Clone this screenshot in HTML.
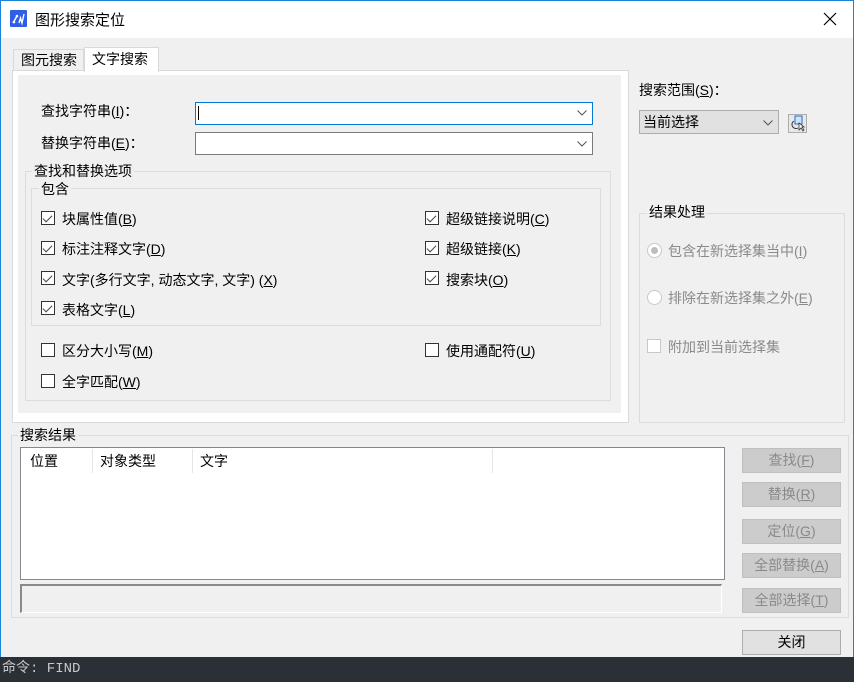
<!DOCTYPE html>
<html><head><meta charset="utf-8"><style>
*{margin:0;padding:0;box-sizing:border-box}
body{width:854px;height:682px;overflow:hidden;background:#f0f0f0;font-family:"Liberation Sans","Microsoft YaHei","Noto Sans CJK SC",sans-serif;font-size:14px;color:#000;position:relative}
.a{position:absolute;white-space:nowrap}
.cb{position:absolute;width:14px;height:14px;border:1px solid #333;background:#fff}
.cb.c::after{content:"";position:absolute;left:3px;top:1px;width:4px;height:8px;border:solid #444;border-width:0 1.3px 1.3px 0;transform:rotate(45deg)}
.grp{position:absolute;border:1px solid #dcdcdc}
.lg{position:absolute;background:#f0f0f0;padding:0 2px;line-height:16px}
.btn{position:absolute;left:742px;width:99px;height:25px;background:#cccccc;border:1px solid #bfbfbf;color:#8a8a8a;text-align:center;line-height:23px}
u{text-decoration:underline}
</style></head><body>
<div class="a" style="left:0;top:0;width:854px;height:38px;background:#fff"></div>
<div class="a" style="left:0;top:0;width:1px;height:657px;background:#1883d7"></div>
<div class="a" style="right:0;top:0;width:1px;height:657px;background:#1883d7"></div>
<div class="a" style="left:0;top:0;width:854px;height:1px;background:#1883d7"></div>
<svg class="a" style="left:10px;top:10px" width="17" height="17"><rect width="17" height="17" rx="1" fill="#2f5fe8"/><path d="M3 13L7 6M9 13L10.5 8L12 13L14 4" fill="none" stroke="#fff" stroke-width="1.4"/><circle cx="4" cy="12" r="1.3" fill="#fff"/><circle cx="7" cy="6" r="1.3" fill="#fff"/></svg>
<div class="a" style="left:35px;top:9px;font-size:15px">图形搜索定位</div>
<svg class="a" style="left:823px;top:12px" width="14" height="14"><path d="M1 1L13 13M13 1L1 13" stroke="#000" stroke-width="1.2"/></svg>

<div class="a" style="left:13px;top:49px;width:71px;height:22px;border:1px solid #d9d9d9;border-bottom:none;line-height:20px;padding-left:7px">图元搜索</div>
<div class="a" style="left:84px;top:47px;width:75px;height:25px;border:1px solid #d9d9d9;border-bottom:none;background:#fff;line-height:22px;padding-left:7px;z-index:2">文字搜索</div>
<div class="a" style="left:12px;top:70px;width:617px;height:353px;border:1px solid #d9d9d9;background:#fff"></div>
<div class="a" style="left:18px;top:75px;width:603px;height:338px;background:#f0f0f0"></div>

<div class="a" style="left:41px;top:101px">查找字符串(<u>I</u>)：</div>
<div class="a" style="left:195px;top:102px;width:398px;height:23px;border:1px solid #0078d7;background:#fff"></div>
<div class="a" style="left:198px;top:106px;width:1px;height:14px;background:#000"></div>
<div class="a" style="left:41px;top:133px">替换字符串(<u>E</u>)：</div>
<div class="a" style="left:195px;top:132px;width:398px;height:23px;border:1px solid #7a7a7a;background:#fff"></div>
<svg class="a" style="left:577px;top:110px" width="10" height="6"><path d="M0.5 0.5L5 5L9.5 0.5" fill="none" stroke="#555"/></svg>
<svg class="a" style="left:577px;top:141px" width="10" height="6"><path d="M0.5 0.5L5 5L9.5 0.5" fill="none" stroke="#555"/></svg>

<div class="grp" style="left:25px;top:171px;width:586px;height:230px"></div>
<div class="lg" style="left:32px;top:163px">查找和替换选项</div>
<div class="grp" style="left:31px;top:188px;width:570px;height:138px"></div>
<div class="lg" style="left:39px;top:181px">包含</div>

<div class="cb c" style="left:41px;top:211px"></div><div class="a" style="left:62px;top:209px">块属性值(<u>B</u>)</div>
<div class="cb c" style="left:41px;top:241px"></div><div class="a" style="left:62px;top:239px">标注注释文字(<u>D</u>)</div>
<div class="cb c" style="left:41px;top:271px"></div><div class="a" style="left:62px;top:270px">文字(多行文字, 动态文字, 文字) (<u>X</u>)</div>
<div class="cb c" style="left:41px;top:301px"></div><div class="a" style="left:62px;top:300px">表格文字(<u>L</u>)</div>
<div class="cb c" style="left:425px;top:211px"></div><div class="a" style="left:446px;top:209px">超级链接说明(<u>C</u>)</div>
<div class="cb c" style="left:425px;top:241px"></div><div class="a" style="left:446px;top:239px">超级链接(<u>K</u>)</div>
<div class="cb c" style="left:425px;top:271px"></div><div class="a" style="left:446px;top:270px">搜索块(<u>O</u>)</div>
<div class="cb" style="left:41px;top:343px"></div><div class="a" style="left:62px;top:341px">区分大小写(<u>M</u>)</div>
<div class="cb" style="left:41px;top:374px"></div><div class="a" style="left:62px;top:372px">全字匹配(<u>W</u>)</div>
<div class="cb" style="left:425px;top:343px"></div><div class="a" style="left:446px;top:341px">使用通配符(<u>U</u>)</div>

<div class="a" style="left:639px;top:80px">搜索范围(<u>S</u>)：</div>
<div class="a" style="left:639px;top:110px;width:140px;height:24px;border:1px solid #adadad;background:#e1e1e1;line-height:22px;padding-left:3px">当前选择</div>
<svg class="a" style="left:763px;top:120px" width="10" height="6"><path d="M0.5 0.5L5 5L9.5 0.5" fill="none" stroke="#555"/></svg>
<div class="a" style="left:788px;top:114px;width:19px;height:19px;border:1px solid #adadad;background:#e8e8e8"></div>
<svg class="a" style="left:790px;top:115px" width="16" height="17"><rect x="5" y="1" width="7" height="8" fill="#cfe3fa" stroke="#2a6ac8"/><path d="M4 6A4 4 0 1 0 8 13" fill="none" stroke="#333"/><path d="M9 8L9 15L11 13L13 16L14 15L12 12L14 12Z" fill="#fff" stroke="#333" stroke-width=".8"/></svg>
<div class="grp" style="left:639px;top:213px;width:206px;height:210px"></div>
<div class="lg" style="left:647px;top:204px">结果处理</div>
<div class="a" style="left:647px;top:243px;width:15px;height:15px;border-radius:50%;border:1px solid #c8c8c8;background:#fff"></div>
<div class="a" style="left:651px;top:247px;width:7px;height:7px;border-radius:50%;background:#bdbdbd"></div>
<div class="a" style="left:668px;top:241px;color:#8a8a8a">包含在新选择集当中(<u>I</u>)</div>
<div class="a" style="left:647px;top:290px;width:15px;height:15px;border-radius:50%;border:1px solid #c8c8c8;background:#fff"></div>
<div class="a" style="left:668px;top:288px;color:#8a8a8a">排除在新选择集之外(<u>E</u>)</div>
<div class="a" style="left:647px;top:339px;width:14px;height:14px;border:1px solid #c8c8c8;background:#fff"></div>
<div class="a" style="left:668px;top:337px;color:#8a8a8a">附加到当前选择集</div>

<div class="grp" style="left:11px;top:435px;width:838px;height:183px"></div>
<div class="lg" style="left:18px;top:427px">搜索结果</div>
<div class="a" style="left:20px;top:447px;width:705px;height:133px;border:1px solid #828790;background:#fff"></div>
<div class="a" style="left:30px;top:451px">位置</div>
<div class="a" style="left:92px;top:449px;width:1px;height:24px;background:#e5e5e5"></div>
<div class="a" style="left:100px;top:451px">对象类型</div>
<div class="a" style="left:192px;top:449px;width:1px;height:24px;background:#e5e5e5"></div>
<div class="a" style="left:200px;top:451px">文字</div>
<div class="a" style="left:492px;top:449px;width:1px;height:24px;background:#e5e5e5"></div>
<div class="a" style="left:20px;top:584px;width:702px;height:29px;border-top:2px solid #8a8a8a;border-left:2px solid #8a8a8a;border-bottom:1px solid #fff;border-right:1px solid #fff;background:#f0f0f0"></div>

<div class="btn" style="top:448px">查找(<u>F</u>)</div>
<div class="btn" style="top:482px">替换(<u>R</u>)</div>
<div class="btn" style="top:519px">定位(<u>G</u>)</div>
<div class="btn" style="top:553px">全部替换(<u>A</u>)</div>
<div class="btn" style="top:588px">全部选择(<u>T</u>)</div>
<div class="btn" style="top:630px;background:#e1e1e1;border-color:#adadad;color:#000">关闭</div>

<div class="a" style="left:0;top:657px;width:854px;height:25px;background:#2b2f36;color:#c8c8c8;font-family:'Liberation Mono','Noto Sans CJK SC',monospace;font-size:14px;line-height:25px;padding-left:2px">命令: FIND</div>
</body></html>
